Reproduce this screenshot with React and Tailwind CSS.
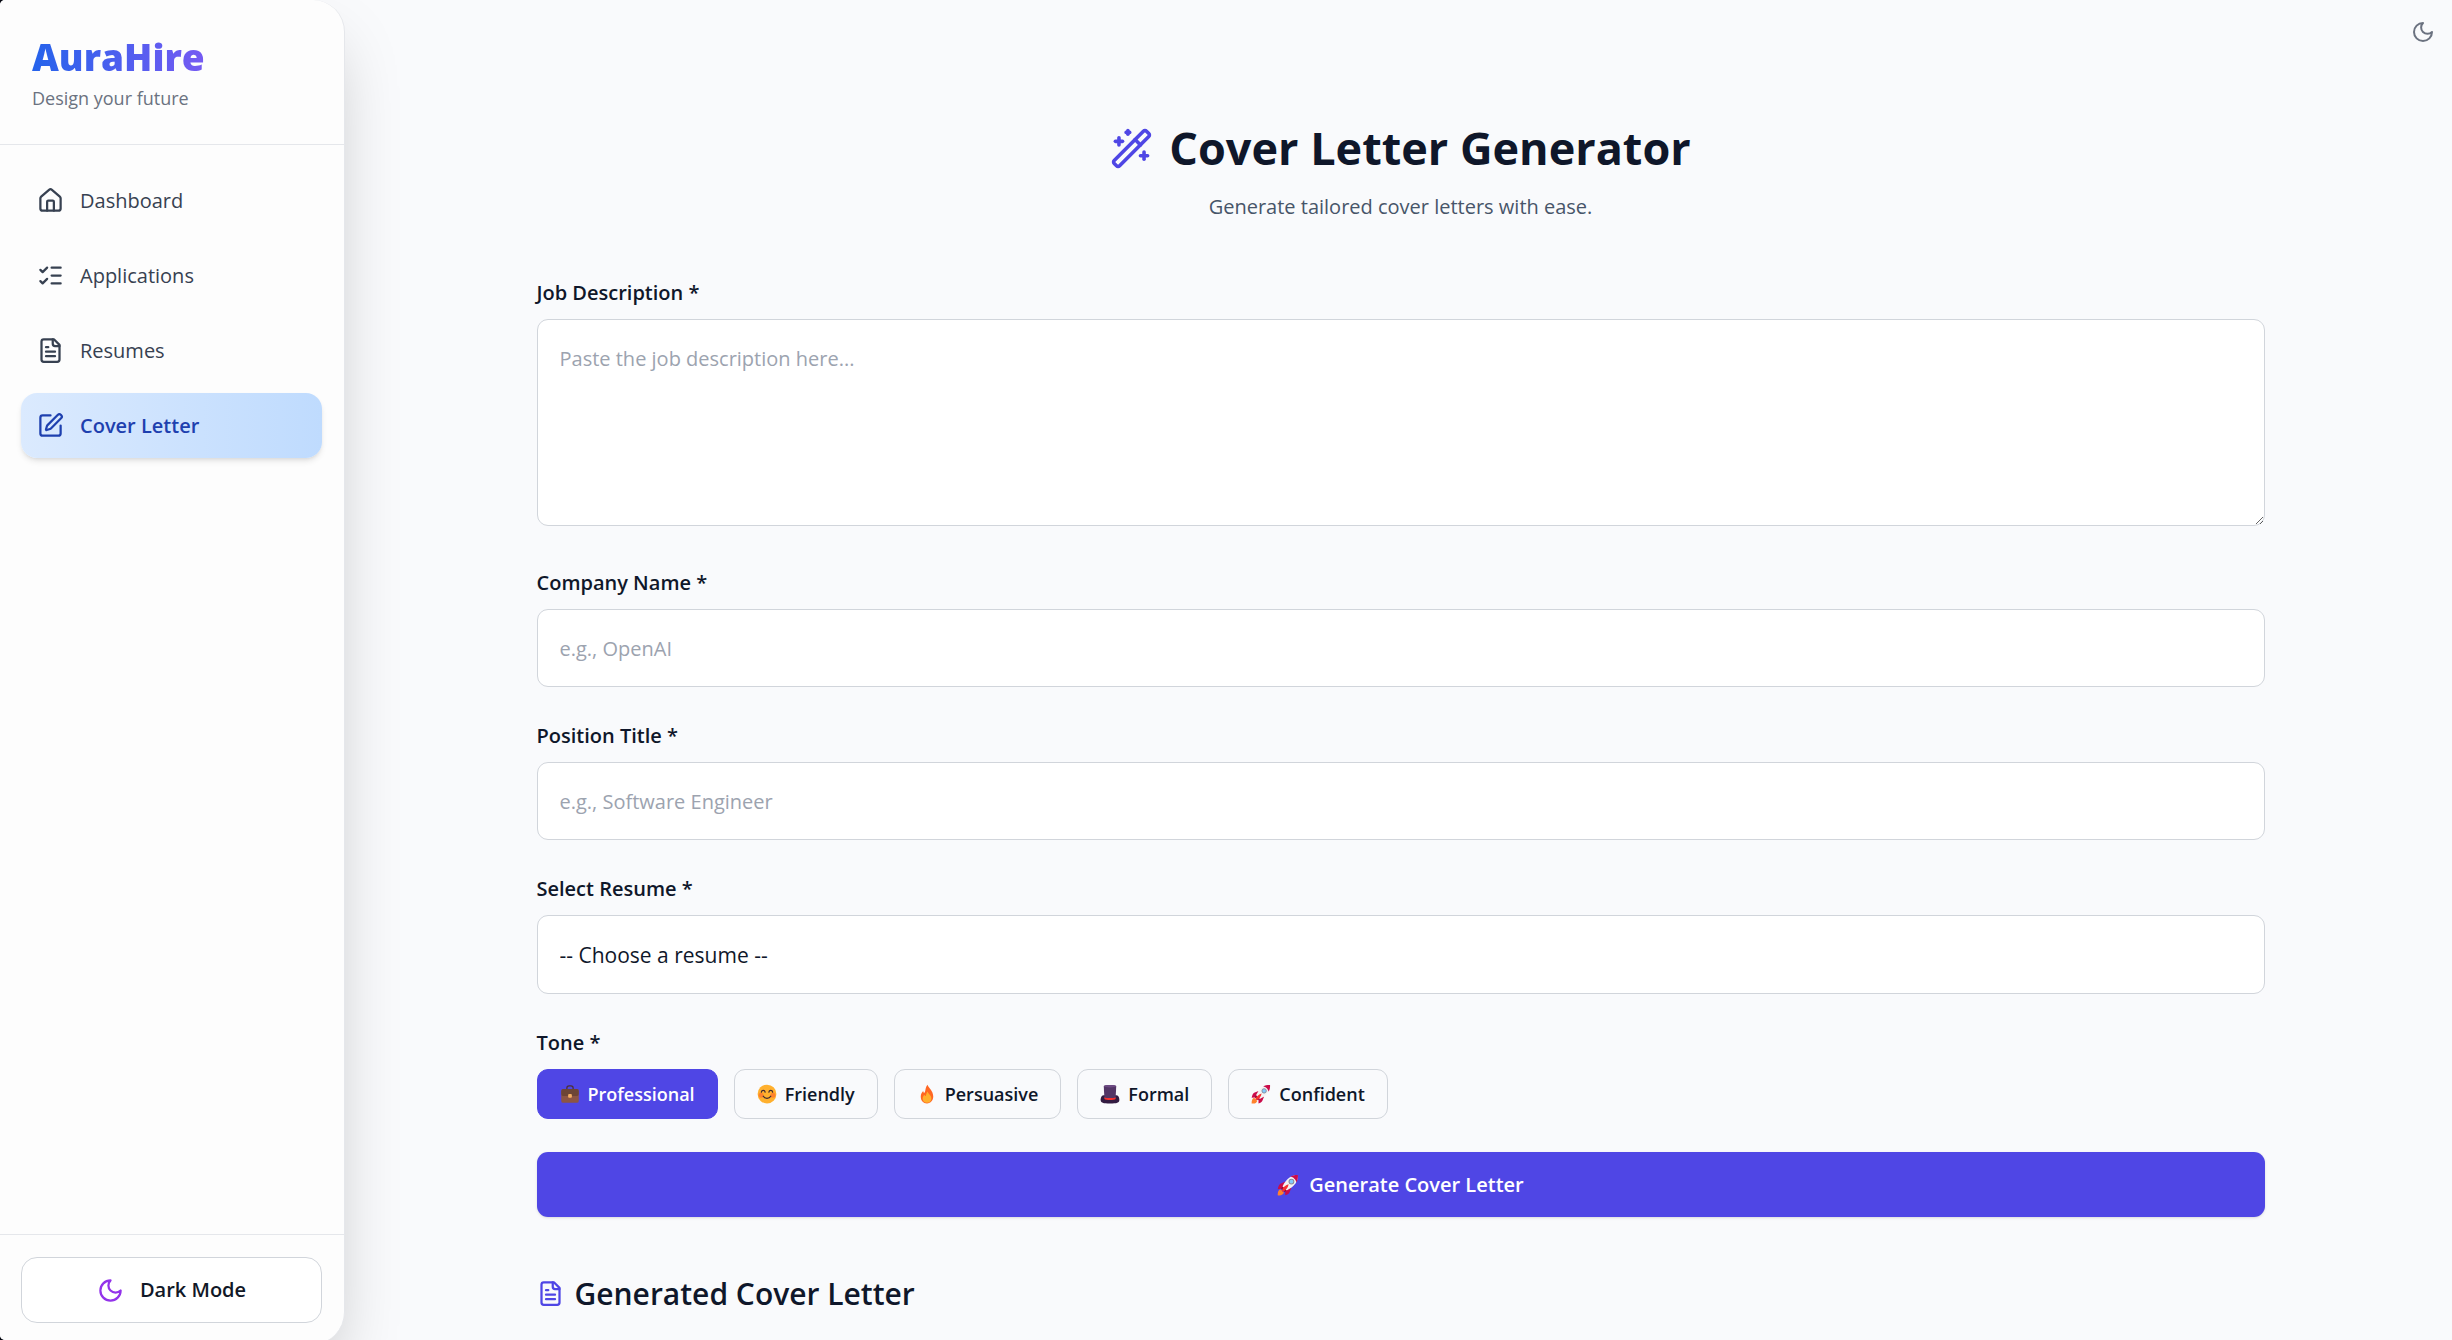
import { useState } from "react";
import { House, ListChecks, SquarePen, WandSparkles } from "lucide-react";

function Stroke({ className, children }) {
  return (
    <svg
      viewBox="0 0 24 24"
      fill="none"
      stroke="currentColor"
      strokeWidth="2"
      strokeLinecap="round"
      strokeLinejoin="round"
      aria-hidden="true"
      className={className}
    >
      {children}
    </svg>
  );
}

function Moon({ className }) {
  return (
    <Stroke className={className}>
      <path d="M12 3a6 6 0 0 0 9 9 9 9 0 1 1-9-9Z" />
    </Stroke>
  );
}

function FileText({ className }) {
  return (
    <Stroke className={className}>
      <path d="M15 2H6a2 2 0 0 0-2 2v16a2 2 0 0 0 2 2h12a2 2 0 0 0 2-2V7Z" />
      <path d="M14 2v4a2 2 0 0 0 2 2h4" />
      <path d="M10 9H8" />
      <path d="M16 13H8" />
      <path d="M16 17H8" />
    </Stroke>
  );
}

function Briefcase({ className }) {
  return (
    <svg viewBox="0 0 32 32" aria-hidden="true" className={className}>
      <path d="M11 9V6.5A3.5 3.5 0 0 1 14.500 3h3A3.500 3.500 0 0 1 21 6.500V9" fill="none" stroke="#4b3037" strokeWidth="2" />
      <rect x="2" y="8" width="28" height="22" rx="3" fill="#8c5543" />
      <path d="M5 8h22a3 3 0 0 1 3 3v5a3 3 0 0 1-3 3H5a3 3 0 0 1-3-3v-5a3 3 0 0 1 3-3Z" fill="#6d4534" />
      <rect x="13" y="16" width="6" height="6" rx="1.500" fill="#f3ad61" />
    </svg>
  );
}

function Smile({ className }) {
  return (
    <svg viewBox="0 0 32 32" aria-hidden="true" className={className}>
      <circle cx="16" cy="16" r="15" fill="#ffb02e" />
      <circle cx="6.500" cy="18" r="4" fill="#ff822d" />
      <circle cx="25.500" cy="18" r="4" fill="#ff822d" />
      <path d="M7 13c.6-3.600 5.400-3.600 6 0M19 13c.6-3.600 5.400-3.600 6 0M10 19.500c2.500 4.500 9.500 4.500 12 0" fill="none" stroke="#402a32" strokeWidth="2" strokeLinecap="round" />
    </svg>
  );
}

function Flame({ className }) {
  return (
    <svg viewBox="0 0 32 32" aria-hidden="true" className={className}>
      <path d="M17 1c1 5 9 9 9 19 0 6-4 11-10 11S6 27 6 20c0-4 2-7 4-9 0 2 1 3 2 3 2-3 1-9 5-13Z" fill="#ff6723" />
      <path d="M17 12c1 4 6 6 6 11 0 4-3 7-7 7s-7-3-7-7c0-3 2-5 3-6 0 1 1 2 2 2 1-2 1-5 3-7Z" fill="#ffb02e" />
    </svg>
  );
}

function TopHat({ className }) {
  return (
    <svg viewBox="0 0 32 32" aria-hidden="true" className={className}>
      <path d="M6 18h20c3 0 5 3 5 7 0 5-4 6-15 6S1 30 1 25c0-4 2-7 5-7Z" fill="#321b41" />
      <path d="M6 3c2-2 18-2 20 0l-1 19c-2 3-16 3-18 0Z" fill="#533566" />
      <path d="M7 21c3 2 15 2 18 0v3c-2 2-16 2-18 0Z" fill="#f8312f" />
      <ellipse cx="16" cy="3.500" rx="9.500" ry="2" fill="#6d4a83" />
    </svg>
  );
}

function Rocket({ className }) {
  return (
    <svg viewBox="0 0 32 32" aria-hidden="true" className={className}>
      <path d="M1 31c0-5 1-8 4-9l5 5c-1 3-4 5-9 4Z" fill="#ff822d" />
      <path d="M12 11 5 14c-2 1-3 4-4 8l9-1ZM21 20l-3 7c-1 2-3 3-6 4l0-8Z" fill="#ca0b4a" />
      <path d="M30.500 1.500C22 1 14 6 8 18l6 6C26 18 31 10 30.500 1.500Z" fill="#f4f4f4" />
      <path d="M30.500 1.500c-4-.2-8 .5-11 2.500 4 0 8.500 4.500 8.500 8.500 2-3 2.700-7 2.500-11Z" fill="#ca0b4a" />
      <path d="m8 18 6 6-3 2-5-5Z" fill="#990838" />
      <path d="M17 15c-4 1-8 4-10 9l1 2c5-2 8-6 9-11Z" fill="#f8312f" />
      <circle cx="21" cy="11" r="3.500" fill="#83cbff" stroke="#8a8a99" strokeWidth="1.500" />
    </svg>
  );
}

const navItems = [
  { label: "Dashboard", Icon: House },
  { label: "Applications", Icon: ListChecks },
  { label: "Resumes", Icon: FileText },
  { label: "Cover Letter", Icon: SquarePen, active: true },
];

const tones = [
  { label: "Professional", Icon: Briefcase },
  { label: "Friendly", Icon: Smile },
  { label: "Persuasive", Icon: Flame },
  { label: "Formal", Icon: TopHat },
  { label: "Confident", Icon: Rocket },
];

const fieldClass =
  "block w-full rounded-[11px] border border-[#d1d5db] bg-white px-[22px] leading-8 text-[#0f172a] placeholder:text-[#9ca3af]";
const labelClass = "mb-[10px] block text-[20px] leading-8 font-semibold";

function Sidebar() {
  return (
    <aside className="relative z-10 flex h-[calc(100vh+4px)] w-[345px] shrink-0 flex-col rounded-r-[32px] border-r border-[#e5e7eb] bg-[#fdfdfd] shadow-[0_34px_68px_-16px_rgba(0,0,0,0.25)]">
      <div className="border-b border-[#e5e7eb] px-8 pt-8 pb-8">
        <h1 className="bg-linear-to-r/srgb from-[#2563eb] to-[#a855f7] bg-clip-text text-[37px] leading-[50px] font-extrabold text-transparent">
          AuraHire
        </h1>
        <p className="mt-[2px] text-[18px] leading-7 text-[#6b7280]">Design your future</p>
      </div>
      <nav className="flex flex-1 flex-col gap-[10px] pt-[23px] pr-[22px] pl-[21px]">
        {navItems.map(({ label, Icon, active }) => (
          <a
            key={label}
            href="#"
            aria-current={active ? "page" : undefined}
            className={
              active
                ? "flex h-[65px] items-center gap-4 rounded-2xl bg-linear-to-r/srgb from-[#dbeafe] to-[#bfdbfe] px-4 text-[20px] font-semibold text-[#1e40af] shadow-md"
                : "flex h-[65px] items-center gap-4 rounded-2xl px-4 text-[20px] text-[#374151]"
            }
          >
            <Icon className="size-[27px]" />
            <span>{label}</span>
          </a>
        ))}
      </nav>
      <div className="border-t border-[#e5e7eb] pt-[22px] pr-[22px] pb-[21px] pl-[21px]">
        <button
          type="button"
          className="flex h-[66px] w-full items-center justify-center gap-4 rounded-2xl border border-[#d1d5db] bg-white text-[20px] font-semibold text-[#111827]"
        >
          <Moon className="size-[27px] text-[#9333ea]" />
          Dark Mode
        </button>
      </div>
    </aside>
  );
}

export default function App() {
  const [tone, setTone] = useState("Professional");

  return (
    <div className="h-screen overflow-hidden bg-[#05060f] font-['Open_Sans','Noto_Sans',sans-serif] text-[#0f172a]">
      <div className="relative flex h-full overflow-hidden rounded-l-[5px] bg-[#f9fafc]">
        <Sidebar />
        <button type="button" aria-label="Toggle theme" className="absolute top-2 right-[5px] p-3 text-[#6b7280]">
          <Moon className="size-6" />
        </button>
        <main className="min-w-0 flex-1 pt-[121px] pr-8 pl-9">
          <div className="mx-auto max-w-[1728px]">
            <header className="mb-[54px] text-center">
              <h2 className="flex items-center justify-center gap-4 text-[45px] leading-[54px] font-bold">
                <WandSparkles className="size-[43px] text-[#4f46e5]" />
                Cover Letter Generator
              </h2>
              <p className="mt-4 text-[20px] leading-8 text-[#475569]">Generate tailored cover letters with ease.</p>
            </header>

            <form className="flex flex-col gap-[33px]" onSubmit={(e) => e.preventDefault()}>
              <div className="pb-2">
                <label htmlFor="job" className={labelClass}>Job Description *</label>
                <textarea id="job" placeholder="Paste the job description here..." className={`${fieldClass} h-[207px] py-[23px] text-[20px]`} />
              </div>
              <div>
                <label htmlFor="company" className={labelClass}>Company Name *</label>
                <input id="company" type="text" placeholder="e.g., OpenAI" className={`${fieldClass} h-[78px] text-[20px]`} />
              </div>
              <div>
                <label htmlFor="position" className={labelClass}>Position Title *</label>
                <input id="position" type="text" placeholder="e.g., Software Engineer" className={`${fieldClass} h-[78px] text-[20px]`} />
              </div>
              <div>
                <label htmlFor="resume" className={labelClass}>Select Resume *</label>
                <select id="resume" className={`${fieldClass} h-[79px] appearance-none text-[21px]`}>
                  <option>-- Choose a resume --</option>
                </select>
              </div>
              <fieldset>
                <legend className={labelClass}>Tone *</legend>
                <div className="flex flex-wrap gap-4">
                  {tones.map(({ label, Icon }) => (
                    <button
                      key={label}
                      type="button"
                      aria-pressed={tone === label}
                      onClick={() => setTone(label)}
                      className={
                        tone === label
                          ? "flex h-[50px] items-center gap-2 rounded-[11px] border border-[#4f46e5] bg-[#4f46e5] px-[22px] text-[18px] font-semibold text-white"
                          : "flex h-[50px] items-center gap-2 rounded-[11px] border border-[#d1d5db] px-[22px] text-[18px] font-semibold text-[#0f172a]"
                      }
                    >
                      <Icon className="size-5" />
                      {label}
                    </button>
                  ))}
                </div>
              </fieldset>
              <button
                type="submit"
                className="flex h-[65px] w-full items-center justify-center gap-[10px] rounded-[11px] bg-[#4f46e5] text-[20px] font-semibold text-white shadow"
              >
                <Rocket className="size-[22px]" />
                Generate Cover Letter
              </button>
            </form>

            <section className="mt-[55px]">
              <h3 className="flex items-center gap-[11px] text-[30px] leading-[43px] font-semibold">
                <FileText className="size-[27px] text-[#4f46e5]" />
                Generated Cover Letter
              </h3>
            </section>
          </div>
        </main>
      </div>
    </div>
  );
}
